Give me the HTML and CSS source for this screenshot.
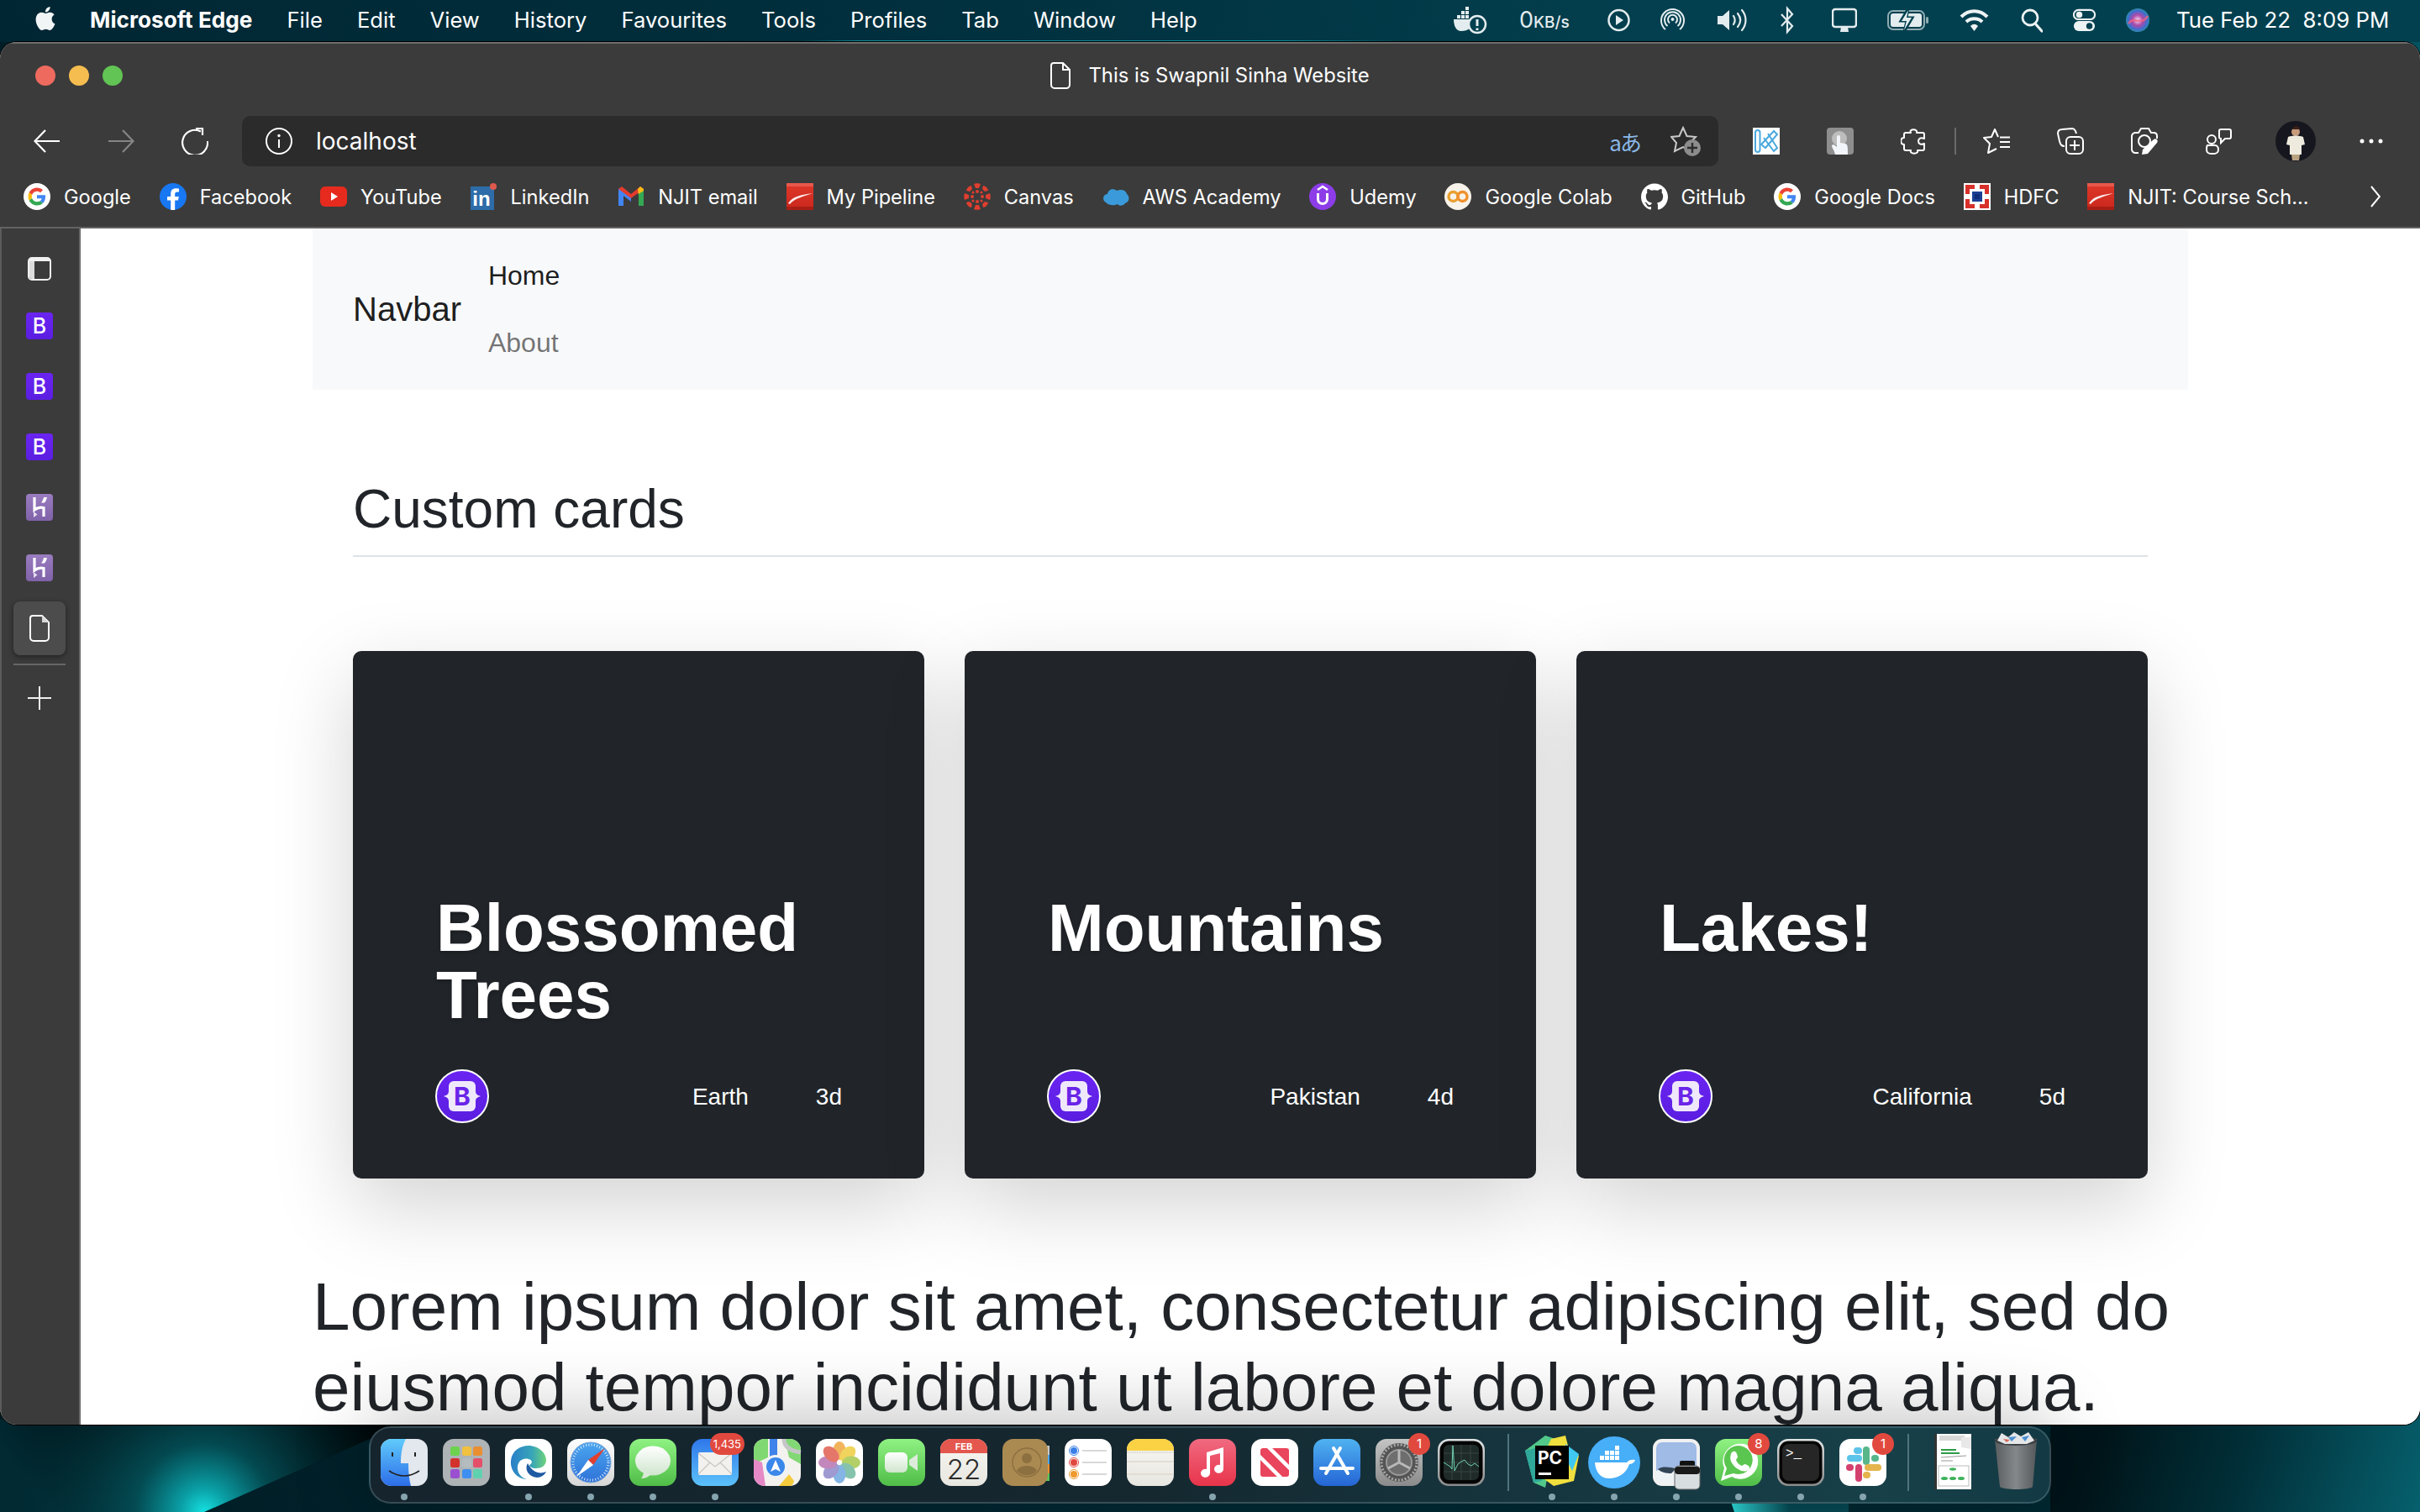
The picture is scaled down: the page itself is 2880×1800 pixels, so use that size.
FILE: index.html
```html
<!DOCTYPE html>
<html lang="en">
<head>
<meta charset="utf-8">
<title>This is Swapnil Sinha Website</title>
<link rel="stylesheet" href="styles.css">
</head>
<body>
<svg class="wallpaper" viewBox="0 0 2880 1800" aria-hidden="true">
  <defs>
    <linearGradient id="wpBase" x1="0" y1="0" x2="1" y2="0"><stop offset="0" stop-color="#001c24"/><stop offset=".5" stop-color="#022a35"/><stop offset=".85" stop-color="#012831"/><stop offset="1" stop-color="#04525f"/></linearGradient>
    <linearGradient id="wpLeftBase" gradientUnits="userSpaceOnUse" x1="200" y1="1695" x2="60" y2="1800"><stop offset="0" stop-color="#000608"/><stop offset="1" stop-color="#012a33"/></linearGradient>
    <radialGradient id="wpLeft" gradientUnits="userSpaceOnUse" cx="243" cy="1800" r="235"><stop offset="0" stop-color="#16e0e0"/><stop offset=".12" stop-color="#0aa0a6"/><stop offset=".35" stop-color="#04545c" stop-opacity=".85"/><stop offset="1" stop-color="#022a33" stop-opacity="0"/></radialGradient>
    <linearGradient id="wpRight" gradientUnits="userSpaceOnUse" x1="2500" y1="1690" x2="2880" y2="1800"><stop offset="0" stop-color="#001419"/><stop offset=".45" stop-color="#012f38"/><stop offset="1" stop-color="#06606d"/></linearGradient>
    <linearGradient id="wpStreak" gradientUnits="userSpaceOnUse" x1="2062" y1="1800" x2="2130" y2="1800"><stop offset="0" stop-color="#2fdcdc"/><stop offset="1" stop-color="#064a55"/></linearGradient>
    <linearGradient id="gBlueV" x1="0" y1="0" x2="0" y2="1"><stop offset="0" stop-color="#6b24f2"/><stop offset="1" stop-color="#5a1ee0"/></linearGradient>
    <linearGradient id="gHero" x1="0" y1="0" x2="0" y2="1"><stop offset="0" stop-color="#9a7cc0"/><stop offset="1" stop-color="#7f62a8"/></linearGradient>
    <linearGradient id="gGreen" x1="0" y1="0" x2="0" y2="1"><stop offset="0" stop-color="#8ff283"/><stop offset="1" stop-color="#50bd48"/></linearGradient>
    <linearGradient id="gFinder" x1="0" y1="0" x2="0" y2="1"><stop offset="0" stop-color="#60cbfb"/><stop offset="1" stop-color="#2c6de9"/></linearGradient>
    <linearGradient id="gMail" x1="0" y1="0" x2="0" y2="1"><stop offset="0" stop-color="#2f77ea"/><stop offset="1" stop-color="#5cc2fb"/></linearGradient>
    <linearGradient id="gEdge" x1="0" y1="0" x2="1" y2="0"><stop offset="0" stop-color="#2a7fc8"/><stop offset=".6" stop-color="#38a5b8"/><stop offset="1" stop-color="#6ed37a"/></linearGradient>
    <linearGradient id="gSafari" x1="0" y1="0" x2="0" y2="1"><stop offset="0" stop-color="#ffffff"/><stop offset="1" stop-color="#d6d6d6"/></linearGradient>
    <linearGradient id="gCompass" x1="0" y1="0" x2="0" y2="1"><stop offset="0" stop-color="#4aa6ef"/><stop offset="1" stop-color="#2e72d8"/></linearGradient>
    <linearGradient id="gBubble" x1="0" y1="0" x2="0" y2="1"><stop offset="0" stop-color="#ffffff"/><stop offset="1" stop-color="#cfe6cd"/></linearGradient>
    <linearGradient id="gMusic" x1="0" y1="0" x2="0" y2="1"><stop offset="0" stop-color="#f06a80"/><stop offset="1" stop-color="#e8344a"/></linearGradient>
    <linearGradient id="gStore" x1="0" y1="0" x2="0" y2="1"><stop offset="0" stop-color="#4fb2f0"/><stop offset="1" stop-color="#2565d6"/></linearGradient>
    <linearGradient id="gPrefs" x1="0" y1="0" x2="0" y2="1"><stop offset="0" stop-color="#c4c4c4"/><stop offset="1" stop-color="#8b8b8b"/></linearGradient>
    <linearGradient id="gBezel" x1="0" y1="0" x2="0" y2="1"><stop offset="0" stop-color="#dfe3e4"/><stop offset="1" stop-color="#8a8a8a"/></linearGradient>
    <linearGradient id="gTrash" x1="0" y1="0" x2="1" y2="0"><stop offset="0" stop-color="#5a5d5f"/><stop offset=".5" stop-color="#85888a"/><stop offset="1" stop-color="#55585a"/></linearGradient>
    <linearGradient id="gPaper" x1="0" y1="0" x2="0" y2="1"><stop offset="0" stop-color="#f8f7f3"/><stop offset="1" stop-color="#e8e6e0"/></linearGradient>
    <linearGradient id="gRedTile" x1="0" y1="0" x2="0" y2="1"><stop offset="0" stop-color="#e0392b"/><stop offset="1" stop-color="#c9261c"/></linearGradient>
    <symbol id="gLogo" viewBox="0 0 32 32"><circle cx="16" cy="16" r="16" fill="#fff"/><g transform="translate(5.5 5.5) scale(.4375)"><path fill="#EA4335" d="M24 9.5c3.54 0 6.71 1.22 9.21 3.6l6.85-6.85C35.9 2.38 30.47 0 24 0 14.62 0 6.51 5.38 2.56 13.22l7.98 6.19C12.43 13.72 17.74 9.5 24 9.5z"/><path fill="#4285F4" d="M46.98 24.55c0-1.57-.15-3.09-.38-4.55H24v9.02h12.94c-.58 2.96-2.26 5.48-4.78 7.18l7.73 6c4.51-4.18 7.09-10.36 7.09-17.65z"/><path fill="#FBBC05" d="M10.53 28.59c-.48-1.45-.76-2.99-.76-4.59s.27-3.14.76-4.59l-7.98-6.19C.92 16.46 0 20.12 0 24c0 3.88.92 7.54 2.56 10.78l7.97-6.19z"/><path fill="#34A853" d="M24 48c6.48 0 11.93-2.13 15.89-5.81l-7.73-6c-2.15 1.45-4.92 2.3-8.16 2.3-6.26 0-11.57-4.22-13.47-9.91l-7.98 6.19C6.51 42.62 14.62 48 24 48z"/></g></symbol>
    <symbol id="njit" viewBox="0 0 32 32"><rect width="32" height="32" fill="url(#gRedTile)"/><rect x="0" y="0" width="32" height="4" fill="#e8584c"/><rect x="0" y="28" width="32" height="4" fill="#a81e15"/><path d="M2 24C8 15 18 14 31 12C20 16 10 18 4 25Z" fill="#fff" opacity=".9"/></symbol>
    <symbol id="bsTile" viewBox="0 0 32 32"><rect width="32" height="32" rx="4" fill="url(#gBlueV)"/><text x="16" y="25" class="sym-b">B</text></symbol>
    <symbol id="heroku" viewBox="0 0 32 32"><rect width="32" height="32" rx="4" fill="url(#gHero)"/><path d="M10 4V19C13 16.500 17 15.500 21 16.500V27" fill="none" stroke="#fff" stroke-width="3.200"/><path d="M21 4H25C24.500 6.500 23.500 8.500 22 10.500H18C19.500 8.500 20.500 6.500 21 4Z" fill="#fff"/><path d="M9 21L13.500 24.500L9 28Z" fill="#e6def0"/></symbol>
    <symbol id="bsRound" viewBox="0 0 64 64"><circle cx="32" cy="32" r="31" fill="url(#gBlueV)" stroke="#fff" stroke-width="2"/><rect x="16" y="14" width="32" height="36" rx="6" fill="#efe8fb"/><path d="M16 26C16 30 13 31 10 32C13 33 16 34 16 38ZM48 26C48 30 51 31 54 32C51 33 48 34 48 38Z" fill="#efe8fb"/><text x="32" y="43" class="sym-b2">B</text></symbol>
  </defs>
  <rect width="2880" height="1800" fill="url(#wpBase)"/>
  <polygon points="0,1690 492,1690 243,1800 0,1800" fill="url(#wpLeftBase)"/>
  <polygon points="0,1690 492,1690 243,1800 0,1800" fill="url(#wpLeft)"/>
  <rect x="2440" y="1690" width="440" height="110" fill="url(#wpRight)"/>
  <polygon points="2060,1788 2200,1788 2200,1800 2064,1800" fill="url(#wpStreak)"/>
</svg>

<header class="menubar">
  <div class="menu-left">
    <svg class="apple" viewBox="0 0 24 24"><path fill="#f2f5f6" d="M12.152 6.896c-.948 0-2.415-1.078-3.96-1.04-2.04.027-3.91 1.183-4.961 3.014-2.117 3.675-.546 9.103 1.519 12.09 1.013 1.454 2.208 3.09 3.792 3.039 1.52-.065 2.09-.987 3.935-.987 1.831 0 2.35.987 3.96.948 1.637-.026 2.676-1.48 3.676-2.948 1.156-1.688 1.636-3.325 1.662-3.415-.039-.013-3.182-1.221-3.22-4.857-.026-3.04 2.48-4.494 2.597-4.559-1.429-2.09-3.623-2.324-4.39-2.376-2-.156-3.675 1.09-4.61 1.09zM15.53 3.83c.843-1.012 1.4-2.427 1.245-3.83-1.207.052-2.662.805-3.532 1.818-.78.896-1.454 2.338-1.273 3.714 1.338.104 2.715-.688 3.559-1.701"/></svg>
    <strong class="menu-app">Microsoft Edge</strong>
    <span>File</span><span>Edit</span><span>View</span><span>History</span><span>Favourites</span><span>Tools</span><span>Profiles</span><span>Tab</span><span>Window</span><span>Help</span>
  </div>
  <div class="menu-right">
    <svg width="43" height="36" viewBox="0 0 43 36"><path d="M1 17H24C24 27 18 31 10 31C4 31 1 25 1 17Z" fill="#e3ecee"/><path d="M5 12h4v4H5zM10 12h4v4h-4zM15 12h4v4h-4zM10 7h4v4h-4zM15 7h4v4h-4zM15 2h4v4h-4z" fill="#e3ecee"/><circle cx="29" cy="23" r="10" fill="#03404f" stroke="#e3ecee" stroke-width="2.500"/><path d="M29 17V25M29 27.500V30" stroke="#e3ecee" stroke-width="3"/></svg>
    <span class="kbs"><span class="kbs-0">0</span>KB/s</span>
    <svg width="27" height="36" viewBox="0 0 27 36"><circle cx="13.500" cy="18" r="12" fill="none" stroke="#e3ecee" stroke-width="2.500"/><path d="M10 12L19 18L10 24Z" fill="#e3ecee"/></svg>
    <svg width="31" height="36" viewBox="0 0 31 36"><g fill="none" stroke="#e3ecee" stroke-width="2"><path d="M6 29A13.500 13.500 0 1 1 23 29"/><path d="M8.500 25A9.500 9.500 0 1 1 20.500 25"/><path d="M11 21.500A5.500 5.500 0 1 1 18 21.500"/></g><circle cx="14.500" cy="17" r="2" fill="#e3ecee"/></svg>
    <svg width="39" height="36" viewBox="0 0 39 36"><path d="M1 13H7L15 6V30L7 23H1Z" fill="#e3ecee"/><path d="M20 13C22 16 22 20 20 23M25 10C29 15 29 21 25 26M30 6C36 13 36 23 30 30" fill="none" stroke="#e3ecee" stroke-width="2.200" stroke-linecap="round"/></svg>
    <svg width="26" height="36" viewBox="0 0 26 36"><path d="M2 11L15 25L9 32V4L15 11L2 25" fill="none" stroke="#e3ecee" stroke-width="2.200"/></svg>
    <svg width="30" height="36" viewBox="0 0 30 36"><rect x="1" y="5" width="28" height="21" rx="3" fill="none" stroke="#e3ecee" stroke-width="2.500"/><path d="M11 26H19L20 32H10Z" fill="#e3ecee"/></svg>
    <svg width="50" height="36" viewBox="0 0 50 36"><rect x="1" y="7" width="43" height="22" rx="6" fill="none" stroke="#8fabb2" stroke-width="2"/><rect x="4" y="10" width="37" height="16" rx="3" fill="#e3ecee"/><rect x="46" y="14" width="3" height="8" rx="1.500" fill="#8fabb2"/><path d="M25 4L16 19H23L20 32L30 15H23Z" fill="#03404f" stroke="#03404f" stroke-width="3"/><path d="M25 6L17 19H23L20 30L29 15H23Z" fill="#e3ecee"/></svg>
    <svg width="37" height="36" viewBox="0 0 37 36"><g fill="none" stroke="#eef3f4" stroke-width="4"><path d="M2 14C11 5 24 5 33 14"/><path d="M8 20C13 15 22 15 27 20"/></g><path d="M13 25C16 22 19 22 22 25L17.500 31Z" fill="#eef3f4"/></svg>
    <svg width="26" height="36" viewBox="0 0 26 36"><circle cx="11" cy="15" r="9" fill="none" stroke="#eef3f4" stroke-width="2.800"/><path d="M17 22L25 31" stroke="#eef3f4" stroke-width="3.200" stroke-linecap="round"/></svg>
    <svg width="27" height="36" viewBox="0 0 29 36"><rect x="1" y="5" width="27" height="12" rx="6" fill="none" stroke="#eef3f4" stroke-width="2.200"/><circle cx="8" cy="11" r="4" fill="#eef3f4"/><rect x="1" y="19" width="27" height="13" rx="6.500" fill="#eef3f4"/><circle cx="21" cy="25.500" r="4" fill="#03404f"/></svg>
    <svg class="siri" width="28" height="36" viewBox="0 0 28 28"><defs><radialGradient id="gSiri" cx=".5" cy=".5" r=".55"><stop offset="0" stop-color="#f2e4f8"/><stop offset=".4" stop-color="#b14aa8"/><stop offset=".75" stop-color="#3a6fd0"/><stop offset="1" stop-color="#2f9e8e"/></radialGradient></defs><circle cx="14" cy="14" r="14" fill="url(#gSiri)"/><path d="M3 18C10 8 18 22 26 9" stroke="#f0627f" stroke-width="2.500" fill="none" opacity=".8"/></svg>
    <span class="clock">Tue Feb 22&nbsp; 8:09 PM</span>
  </div>
</header>

<div class="window">
  <div class="chrome">
    <div class="titlebar">
      <div class="lights"><i class="light red"></i><i class="light yellow"></i><i class="light green"></i></div>
      <div class="title">
        <svg width="24" height="32" viewBox="0 0 24 32"><path d="M4 1H15L23 9V27A4 4 0 0 1 19 31H5A4 4 0 0 1 1 27V4A3 3 0 0 1 4 1ZM15 1V9H23" fill="none" stroke="#fff" stroke-width="2"/></svg>
        <span>This is Swapnil Sinha Website</span>
      </div>
      <div></div>
    </div>
    <div class="toolbar">
      <div class="nav-btns">
        <svg width="32" height="32" viewBox="0 0 32 32"><path d="M31 16H2M14 3L1.500 16L14 29" fill="none" stroke="#fff" stroke-width="2.200"/></svg>
        <svg width="32" height="32" viewBox="0 0 32 32"><path d="M1 16H30M18 3L30.500 16L18 29" fill="none" stroke="#858585" stroke-width="2.200"/></svg>
        <svg width="32" height="32" viewBox="0 0 32 32"><path d="M23 4.500A15 15 0 1 0 31 16" fill="none" stroke="#fff" stroke-width="2.200"/><path d="M17 1H25V9" fill="none" stroke="#fff" stroke-width="2.200"/></svg>
      </div>
      <div class="address">
        <svg width="32" height="32" viewBox="0 0 32 32"><circle cx="16" cy="16" r="15" fill="none" stroke="#fff" stroke-width="2"/><circle cx="16" cy="9.500" r="1.700" fill="#fff"/><path d="M16 14V24" stroke="#fff" stroke-width="2"/></svg>
        <span class="url">localhost</span>
        <span class="addr-right">
          <span class="translate">aあ</span>
          <svg width="37" height="36" viewBox="0 0 37 36"><path d="M15 2L19.500 12L30 13L23 20L25 30L15 25L5 30L7 20L1 13L10.500 12Z" fill="none" stroke="#c9c9c9" stroke-width="2"/><circle cx="26" cy="26" r="10" fill="#8c8c8c"/><path d="M26 20V32M20 26H32" stroke="#2b2b2b" stroke-width="2.400"/></svg>
        </span>
      </div>
      <div class="tools">
        <svg width="32" height="32" viewBox="0 0 32 32"><rect width="32" height="32" fill="#fff"/><g fill="none" stroke="#4aa8de" stroke-width="2"><rect x="3" y="3" width="5.500" height="26" rx="2.750"/><path d="M10 20L25 4L29 8L15 24Z"/><path d="M13 12L25 28L29 24L18 7"/></g></svg>
        <svg width="32" height="32" viewBox="0 0 32 32"><rect width="32" height="32" rx="4" fill="#8e8e8e"/><circle cx="15" cy="13" r="9" fill="#bdbdbd"/><path d="M12 11A2 2 0 0 1 16 11V18L22 19C25 20 25 22 25 32H10C9 27 6 24 6 21C8 19 10 21 12 23Z" fill="#f2f6fb"/></svg>
        <svg width="32" height="32" viewBox="0 0 32 32"><path d="M12 6C9 1 21 1 19 6H26C27 6 28 7 28 8V13C24 11 21 13 21 16C21 19 24 21 28 19V25C28 26 27 27 26 27H20C22 32 10 32 12 27H6C5 27 4 26 4 25V20C-1 20 -1 12 4 12V8C4 7 5 6 6 6Z" fill="none" stroke="#fff" stroke-width="2" stroke-linejoin="round"/></svg>
        <i class="tool-sep"></i>
        <svg width="32" height="32" viewBox="0 0 32 32"><path d="M18 11L14 2L10 11L1 12L8 19L6 30L16 25" fill="none" stroke="#fff" stroke-width="2" stroke-linejoin="round"/><path d="M20 11.500H32M20 17H32M20 23H32" fill="none" stroke="#fff" stroke-width="2"/></svg>
        <svg width="32" height="32" viewBox="0 0 32 32"><path d="M9 22C5 22 4 20 3 16L1 7C1 4 3 2 6 2L18 1C20 1 22 3 23 7" fill="none" stroke="#fff" stroke-width="2"/><rect x="11" y="11" width="20" height="20" rx="5" fill="none" stroke="#fff" stroke-width="2"/><path d="M21 15V27M15 21H27" stroke="#fff" stroke-width="2"/></svg>
        <svg width="32" height="32" viewBox="0 0 32 32"><path d="M9 30H5C3 30 1 28 1 26V10C1 8 3 6 5 6H9L12 1H21L24 6H27C30 6 31 8 31 10V13" fill="none" stroke="#fff" stroke-width="2"/><circle cx="16" cy="16" r="7" fill="none" stroke="#fff" stroke-width="2"/><path d="M27 14C30 12 33 15 31 18L20 31L13 32L14 26Z" fill="#fff"/></svg>
        <svg width="32" height="32" viewBox="0 0 32 32"><circle cx="8" cy="14" r="5" fill="none" stroke="#fff" stroke-width="2"/><path d="M3 21H12C15 21 16 24 16 26C16 30 14 31 9 31C4 31 2 30 2 26C2 24 2 22 3 21Z" fill="none" stroke="#fff" stroke-width="2"/><path d="M19 2H29C31 2 31 3 31 4V11C31 13 30 13 29 13H24L19 18V13C18 13 17 12 17 11V4C17 3 18 2 19 2Z" fill="none" stroke="#fff" stroke-width="2"/></svg>
        <svg class="avatar-user" width="48" height="48" viewBox="0 0 48 48"><circle cx="24" cy="24" r="24" fill="#16161f"/><circle cx="24" cy="13" r="5" fill="#c79a7a"/><path d="M22 7C24 5 29 6 29 10L20 10Z" fill="#3a2018"/><path d="M15 19C20 17 28 17 33 19L35 28L31 29L31 40H17L17 29L13 28Z" fill="#eeeadd"/><path d="M19 40H29L28 47H20Z" fill="#b9a27f"/></svg>
        <svg class="more" width="28" height="8" viewBox="0 0 28 8"><circle cx="3" cy="4" r="2.500" fill="#fff"/><circle cx="14" cy="4" r="2.500" fill="#fff"/><circle cx="25" cy="4" r="2.500" fill="#fff"/></svg>
      </div>
    </div>
    <nav class="bookmarks">
      <a class="bm"><svg><use href="#gLogo"/></svg>Google</a>
      <a class="bm"><svg viewBox="0 0 32 32"><circle cx="16" cy="16" r="16" fill="#1877f2"/><path d="M22 20.500L22.800 16H18.200V13C18.200 11.700 18.900 10.500 20.900 10.500H23V6.600C23 6.600 21.100 6.300 19.300 6.300C15.600 6.300 13.200 8.500 13.200 12.600V16H9V20.500H13.200V32H18.200V20.500Z" fill="#fff"/></svg>Facebook</a>
      <a class="bm"><svg viewBox="0 0 32 32"><rect y="4" width="32" height="24" rx="6" fill="#e62b1e"/><path d="M13 11L21 16L13 21Z" fill="#fff"/></svg>YouTube</a>
      <a class="bm"><svg viewBox="0 0 32 32"><rect y="4" width="28" height="28" fill="#2d6ca8"/><circle cx="27" cy="4" r="4" fill="#e0594c"/><text x="13" y="27" class="sym-in">in</text></svg>LinkedIn</a>
      <a class="bm"><svg viewBox="0 0 32 32"><path d="M1 7L4 5L16 16V22L7 15V27H1Z" fill="#4285f4"/><path d="M1 7L16 18L31 7L27 4L16 13L5 4Z" fill="#e33b2e"/><path d="M27 4L31 7V11L25 15L24 7Z" fill="#f8bb15"/><path d="M25 13L31 9V27H25Z" fill="#34a853"/></svg>NJIT email</a>
      <a class="bm"><svg><use href="#njit"/></svg>My Pipeline</a>
      <a class="bm"><svg viewBox="0 0 32 32"><g fill="#e03e2f"><circle cx="16" cy="10" r="2"/><circle cx="22" cy="16" r="2"/><circle cx="16" cy="22" r="2"/><circle cx="10" cy="16" r="2"/><circle cx="21" cy="11" r="1.600"/><circle cx="21" cy="21" r="1.600"/><circle cx="11" cy="21" r="1.600"/><circle cx="11" cy="11" r="1.600"/><path d="M12 1C14 0 18 0 20 1L18 6H14ZM12 31C14 32 18 32 20 31L18 26H14ZM1 12C0 14 0 18 1 20L6 18V14ZM31 12C32 14 32 18 31 20L26 18V14ZM5 5C6 4 8 3 9 3L10 7L7 10L3 9C3 8 4 6 5 5ZM27 5C26 4 24 3 23 3L22 7L25 10L29 9C29 8 28 6 27 5ZM5 27C6 28 8 29 9 29L10 25L7 22L3 23C3 24 4 26 5 27ZM27 27C26 28 24 29 23 29L22 25L25 22L29 23C29 24 28 26 27 27Z"/></g></svg>Canvas</a>
      <a class="bm"><svg viewBox="0 0 32 32"><path d="M4 23C-1 20 1 13 6 13C7 7 13 6 17 9C22 7 28 8 29 13C33 16 32 23 27 24C25 27 20 28 18 25C14 27 8 27 4 23Z" fill="#3b9ad9"/></svg>AWS Academy</a>
      <a class="bm"><svg viewBox="0 0 32 32"><circle cx="16" cy="16" r="16" fill="#8c3de8"/><path d="M10 8L16 4L22 8" fill="none" stroke="#fff" stroke-width="2.500"/><path d="M10.500 12V19A5.500 5.500 0 0 0 21.500 19V12" fill="none" stroke="#fff" stroke-width="3"/></svg>Udemy</a>
      <a class="bm"><svg viewBox="0 0 32 32"><circle cx="16" cy="16" r="16" fill="#f8f3ea"/><circle cx="10.500" cy="16" r="5.500" fill="none" stroke="#e8a030" stroke-width="3.400"/><circle cx="21.500" cy="16" r="5.500" fill="none" stroke="#f0902a" stroke-width="3.400"/></svg>Google Colab</a>
      <a class="bm"><svg viewBox="0 0 24 24"><path fill="#fff" d="M12 .297c-6.630 0-12 5.373-12 12 0 5.303 3.438 9.800 8.205 11.385.6.113.82-.258.82-.577 0-.285-.01-1.040-.015-2.040-3.338.724-4.042-1.610-4.042-1.610C4.422 18.070 3.633 17.700 3.633 17.700c-1.087-.744.084-.729.084-.729 1.205.084 1.838 1.236 1.838 1.236 1.070 1.835 2.809 1.305 3.495.998.108-.776.417-1.305.76-1.605-2.665-.3-5.466-1.332-5.466-5.930 0-1.310.465-2.380 1.235-3.220-.135-.303-.54-1.523.105-3.176 0 0 1.005-.322 3.300 1.230.96-.267 1.980-.399 3-.405 1.020.006 2.040.138 3 .405 2.280-1.552 3.285-1.230 3.285-1.230.645 1.653.24 2.873.12 3.176.765.84 1.230 1.910 1.230 3.220 0 4.610-2.805 5.625-5.475 5.920.42.36.81 1.096.81 2.220 0 1.606-.015 2.896-.015 3.286 0 .315.21.69.825.57C20.565 22.092 24 17.592 24 12.297c0-6.627-5.373-12-12-12"/></svg>GitHub</a>
      <a class="bm"><svg><use href="#gLogo"/></svg>Google Docs</a>
      <a class="bm"><svg viewBox="0 0 32 32"><rect width="32" height="32" fill="#fff"/><path d="M2 2H13V7H7V13H2ZM19 2H30V13H25V7H19ZM2 19H7V25H13V30H2ZM25 19H30V30H19V25H25Z" fill="#d8302b"/><rect x="10" y="10" width="12" height="12" fill="#1c3f94"/><rect x="13" y="13" width="6" height="6" fill="#0f2d78"/></svg>HDFC</a>
      <a class="bm"><svg><use href="#njit"/></svg>NJIT: Course Sch...</a>
      <svg class="bm-next" width="12" height="26" viewBox="0 0 12 26"><path d="M1 1L11 13L1 25" fill="none" stroke="#fff" stroke-width="2"/></svg>
    </nav>
  </div>

  <div class="body-row">
    <aside class="sidebar">
      <div class="side-item first"><svg width="28" height="28" viewBox="0 0 28 28"><rect x="1" y="1" width="26" height="26" rx="4" fill="none" stroke="#f0f0f0" stroke-width="2"/><path d="M1 5A4 4 0 0 1 5 1H23A4 4 0 0 1 27 5V5H1Z" fill="#f0f0f0"/><path d="M2 5H8V26H5A3 3 0 0 1 2 23Z" fill="#dcdcdc"/></svg></div>
      <div class="side-item"><svg width="32" height="32"><use href="#bsTile"/></svg></div>
      <div class="side-item"><svg width="32" height="32"><use href="#bsTile"/></svg></div>
      <div class="side-item"><svg width="32" height="32"><use href="#bsTile"/></svg></div>
      <div class="side-item"><svg width="32" height="32"><use href="#heroku"/></svg></div>
      <div class="side-item"><svg width="32" height="32"><use href="#heroku"/></svg></div>
      <div class="side-item"><div class="side-active"><svg width="24" height="32" viewBox="0 0 24 32"><path d="M4 1H15L23 9V27A4 4 0 0 1 19 31H5A4 4 0 0 1 1 27V4A3 3 0 0 1 4 1Z" fill="none" stroke="#fff" stroke-width="2"/><path d="M15 1V9H23Z" fill="#d8d8d8"/></svg></div></div>
      <i class="side-rule"></i>
      <div class="side-plus"><svg width="28" height="28" viewBox="0 0 28 28"><path d="M14 0V28M0 14H28" stroke="#f0f0f0" stroke-width="2"/></svg></div>
    </aside>

    <main class="page">
      <div class="container">
        <nav class="navbar">
          <a class="brand">Navbar</a>
          <ul class="nav-links">
            <li class="nav-active">Home</li>
            <li>About</li>
          </ul>
        </nav>
        <section class="cards-section">
          <h2 class="section-title">Custom cards</h2>
          <div class="cards">
            <article class="card">
              <h3 class="card-title">Blossomed Trees</h3>
              <ul class="card-meta"><li class="card-avatar"><svg width="64" height="64"><use href="#bsRound"/></svg></li><li>Earth</li><li class="days">3d</li></ul>
            </article>
            <article class="card">
              <h3 class="card-title">Mountains</h3>
              <ul class="card-meta"><li class="card-avatar"><svg width="64" height="64"><use href="#bsRound"/></svg></li><li>Pakistan</li><li class="days">4d</li></ul>
            </article>
            <article class="card">
              <h3 class="card-title">Lakes!</h3>
              <ul class="card-meta"><li class="card-avatar"><svg width="64" height="64"><use href="#bsRound"/></svg></li><li>California</li><li class="days">5d</li></ul>
            </article>
          </div>
        </section>
        <p class="lorem">Lorem ipsum dolor sit amet, consectetur adipiscing elit, sed do eiusmod tempor incididunt ut labore et dolore magna aliqua.</p>
      </div>
    </main>
  </div>
</div>

<footer class="dock-row">
  <div class="dock">
    <div class="app on"><svg viewBox="0 0 56 56"><rect width="56" height="56" rx="13" fill="#e3e8ee"/><path d="M13 0H30C25 9 24 20 24 29H33C33 40 34 49 36 56H13A13 13 0 0 1 0 43V13A13 13 0 0 1 13 0Z" fill="url(#gFinder)"/><path d="M14 16V21M41 16V21" stroke="#222" stroke-width="2"/><path d="M10 38Q28 50 46 38" fill="none" stroke="#222" stroke-width="1.600"/></svg></div>
    <div class="app"><svg viewBox="0 0 56 56"><rect width="56" height="56" rx="13" fill="#aeb3b6"/><rect x="9" y="9" width="11" height="11" rx="2.500" fill="#6dd34f"/><rect x="23" y="9" width="11" height="11" rx="2.500" fill="#f2c13f"/><rect x="36" y="9" width="11" height="11" rx="2.500" fill="#e98f32"/><rect x="9" y="23" width="11" height="11" rx="2.500" fill="#d3322c"/><rect x="23" y="23" width="11" height="11" rx="2.500" fill="#b5bcc0"/><rect x="36" y="23" width="11" height="11" rx="2.500" fill="#e4506a"/><rect x="9" y="36" width="11" height="11" rx="2.500" fill="#9a4fd0"/><rect x="23" y="36" width="11" height="11" rx="2.500" fill="#3f8ff0"/><rect x="36" y="36" width="11" height="11" rx="2.500" fill="#5fd1ae"/></svg></div>
    <div class="app on"><svg viewBox="0 0 56 56"><rect width="56" height="56" rx="13" fill="#fff"/><path d="M7 26C8 14 18 8 28 8C40 8 49 17 49 25C49 32 43 35 37 35C32 35 29 33 29 31C33 29 33 25 28 24C20 22 14 28 15 36C16 43 21 47 26 48C15 48 6 38 7 26Z" fill="url(#gEdge)"/><path d="M27 29C23 35 27 45 38 46C43 46 47 43 49 39C42 42 33 41 27 29Z" fill="#1f5aa3"/></svg></div>
    <div class="app on"><svg viewBox="0 0 56 56"><rect width="56" height="56" rx="13" fill="url(#gSafari)"/><circle cx="28" cy="28" r="24" fill="url(#gCompass)" stroke="#7fa6d6"/><circle cx="28" cy="28" r="21" fill="none" stroke="#fff" stroke-width="3" stroke-dasharray="1 2.300" opacity=".8"/><polygon points="45,11 31,31 25,25" fill="#e2402f"/><polygon points="11,45 25,25 31,31" fill="#fff"/></svg></div>
    <div class="app on"><svg viewBox="0 0 56 56"><rect width="56" height="56" rx="13" fill="url(#gGreen)"/><ellipse cx="28" cy="26" rx="21" ry="17.500" fill="url(#gBubble)"/><path d="M17 38C17 42 16 45 14 47C19 47 23 45 26 42Z" fill="#d8e9d6"/></svg></div>
    <div class="app on"><svg viewBox="0 0 56 56"><rect width="56" height="56" rx="13" fill="url(#gMail)"/><rect x="8" y="16" width="40" height="27" rx="2" fill="#f3f1ee"/><path d="M8 17L28 33L48 17M8 42L22 28M48 42L34 28" fill="none" stroke="#c7c4c0" stroke-width="1.200"/></svg><b class="badge badge-wide">1,435</b></div>
    <div class="app"><svg viewBox="0 0 56 56"><rect width="56" height="56" rx="13" fill="#f4f2ee"/><path d="M0 13A13 13 0 0 1 13 0H17V22L0 30Z" fill="#80d872"/><path d="M0 24L10 28L14 56H13A13 13 0 0 1 0 43Z" fill="#e58ac6"/><path d="M30 56L42 42L48 50C47 54 45 56 43 56Z" fill="#f5cb3e"/><path d="M37 0H43A13 13 0 0 1 56 13V30L42 22Z" fill="#82d874"/><path d="M36 0C36 8 42 14 56 16" fill="none" stroke="#c5c6c8" stroke-width="5"/><rect x="19" y="0" width="9" height="24" fill="#3f83ea"/><circle cx="26" cy="33" r="14" fill="#f0f2f5"/><circle cx="26" cy="33" r="11" fill="#3b87ea"/><path d="M26 25L32 39L26 36L20 39Z" fill="#fff"/></svg></div>
    <div class="app"><svg viewBox="0 0 56 56"><rect width="56" height="56" rx="13" fill="#fff"/><g opacity=".82"><ellipse cx="28" cy="14" rx="7.500" ry="11" fill="#f0a33a"/><ellipse cx="28" cy="14" rx="7.500" ry="11" fill="#efcb3a" transform="rotate(45 28 28)"/><ellipse cx="28" cy="14" rx="7.500" ry="11" fill="#a3c648" transform="rotate(90 28 28)"/><ellipse cx="28" cy="14" rx="7.500" ry="11" fill="#6cb79a" transform="rotate(135 28 28)"/><ellipse cx="28" cy="14" rx="7.500" ry="11" fill="#6aa6e0" transform="rotate(180 28 28)"/><ellipse cx="28" cy="14" rx="7.500" ry="11" fill="#8a85c8" transform="rotate(225 28 28)"/><ellipse cx="28" cy="14" rx="7.500" ry="11" fill="#b56fae" transform="rotate(270 28 28)"/><ellipse cx="28" cy="14" rx="7.500" ry="11" fill="#e0584a" transform="rotate(315 28 28)"/></g></svg></div>
    <div class="app"><svg viewBox="0 0 56 56"><rect width="56" height="56" rx="13" fill="url(#gGreen)"/><rect x="8" y="16" width="27" height="24" rx="6" fill="url(#gBubble)"/><path d="M37 25L47 18V38L37 31Z" fill="#dcebda"/></svg></div>
    <div class="app"><svg viewBox="0 0 56 56"><rect width="56" height="56" rx="13" fill="url(#gPaper)"/><path d="M0 17V13A13 13 0 0 1 13 0H43A13 13 0 0 1 56 13V17Z" fill="#e4574e"/><text x="28" y="13" class="cal-mon">FEB</text><text x="28" y="48" class="cal-day">22</text></svg></div>
    <div class="app"><svg viewBox="0 0 56 56"><rect x="50" y="8" width="6" height="11" fill="#c8c8c8"/><rect x="50" y="19" width="6" height="11" fill="#4aa6ef"/><rect x="50" y="30" width="6" height="11" fill="#ee8f2c"/><rect x="50" y="41" width="6" height="9" fill="#5dc35a"/><rect width="54" height="56" rx="13" fill="#ab8a52"/><circle cx="29" cy="28" r="17" fill="none" stroke="#8d7040" stroke-width="1.500"/><circle cx="29" cy="23" r="6" fill="#8d7040"/><path d="M17 38C20 30 38 30 41 38C35 45 23 45 17 38Z" fill="#8d7040"/></svg></div>
    <div class="app"><svg viewBox="0 0 56 56"><rect width="56" height="56" rx="13" fill="#fff"/><circle cx="11" cy="14" r="4" fill="#3a7fe8"/><circle cx="11" cy="14" r="5.500" fill="none" stroke="#3a7fe8"/><circle cx="11" cy="28" r="4" fill="#e0473e"/><circle cx="11" cy="28" r="5.500" fill="none" stroke="#e0473e"/><circle cx="11" cy="42" r="4" fill="#ee9a2e"/><circle cx="11" cy="42" r="5.500" fill="none" stroke="#ee9a2e"/><path d="M21 14H50M21 28H50M21 42H50" stroke="#cbcbcb" stroke-width="1.500"/></svg></div>
    <div class="app"><svg viewBox="0 0 56 56"><rect width="56" height="56" rx="13" fill="url(#gPaper)"/><path d="M0 14V13A13 13 0 0 1 13 0H43A13 13 0 0 1 56 13V14Z" fill="#fbd244"/><path d="M0 27H56M0 42H56" stroke="#ddd9d0" stroke-width="1.500"/><path d="M0 16H56" stroke="#cfccc3" stroke-dasharray="1 1" stroke-width="1.500"/></svg></div>
    <div class="app on"><svg viewBox="0 0 56 56"><rect width="56" height="56" rx="13" fill="url(#gMusic)"/><path d="M21 16L41 10V36A5.500 5 0 1 1 37 31V17L25 20V41A5.500 5 0 1 1 21 36Z" fill="#fff"/></svg></div>
    <div class="app"><svg viewBox="0 0 56 56"><rect width="56" height="56" rx="13" fill="#fff"/><rect x="11" y="11" width="34" height="34" rx="3" fill="#e9455c"/><path d="M9 20L36 47M20 9L47 36" stroke="#fff" stroke-width="4.500"/></svg></div>
    <div class="app"><svg viewBox="0 0 56 56"><rect width="56" height="56" rx="13" fill="url(#gStore)"/><path d="M32 11L15 41M24 11L41 41M9 35H47" stroke="#fff" stroke-width="4" stroke-linecap="round"/></svg></div>
    <div class="app"><svg viewBox="0 0 56 56"><rect width="56" height="56" rx="13" fill="url(#gPrefs)"/><circle cx="28" cy="28" r="23" fill="#545454"/><circle cx="28" cy="28" r="21" fill="none" stroke="#aaa" stroke-width="3" stroke-dasharray="2 2"/><circle cx="28" cy="28" r="15" fill="#6e6e6e" stroke="#999" stroke-width="2"/><path d="M28 28V13M28 28L41 35M28 28L15 35" stroke="#b9b9b9" stroke-width="3"/></svg><b class="badge">1</b></div>
    <div class="app"><svg viewBox="0 0 56 56"><rect width="56" height="56" rx="13" fill="url(#gBezel)"/><rect x="2.500" y="2.500" width="51" height="51" rx="11" fill="#050505"/><rect x="7" y="7" width="42" height="42" rx="6" fill="#1f2b28"/><path d="M7 17H49M7 28H49M7 39H49M17 7V49M28 7V49M39 7V49" stroke="#3a4c47" stroke-width=".8"/><path d="M7 28L15 33L17 36L18 8L20 38L24 30L28 27L32 25L36 30L40 32L44 29L49 33" fill="none" stroke="#6fd0b0" stroke-width="1"/></svg></div>
    <i class="dock-sep first-sep"></i>
    <div class="app on"><svg viewBox="0 0 56 56"><polygon points="-4,14 20,-4 32,0 20,58 6,52" fill="#52c98a"/><polygon points="27,0 44,-4 48,12 60,20 54,50 30,56 8,40" fill="#f0df3e"/><polygon points="44,6 60,18 52,38 46,26" fill="#3fc8f0"/><polygon points="-4,14 12,10 16,50 6,52" fill="#2fa89b"/><rect x="8" y="8" width="40" height="40" fill="#000"/><text x="11" y="30" class="pc">PC</text><rect x="12" y="40" width="15" height="3" fill="#fff"/></svg></div>
    <div class="app on"><svg viewBox="0 0 56 56"><circle cx="28" cy="28" r="31" fill="#47aef8"/><path d="M5 28H43C45 25 49 24 53 25C52 29 48 30 46 30C42 42 32 47 22 47C12 47 6 40 5 28Z" fill="#fff"/><path d="M11 20h5v5h-5zM17 20h5v5h-5zM23 20h5v5h-5zM29 20h5v5h-5zM17 14h5v5h-5zM23 14h5v5h-5zM29 14h5v5h-5zM29 8h5v5h-5z" fill="#fff"/></svg></div>
    <div class="app on"><svg viewBox="0 0 56 56"><rect width="56" height="56" rx="11" fill="#f1f1f1"/><rect x="4" y="4" width="48" height="48" rx="7" fill="#9fbbe6"/><path d="M4 38C12 34 22 36 30 33L52 36V45C52 49 50 52 47 52H9C6 52 4 49 4 46Z" fill="#eef2f5"/><path d="M6 36C12 32 20 34 28 35L22 41C16 41 10 40 6 36Z" fill="#345"/><rect x="32" y="26" width="18" height="8" rx="2" fill="#111"/><rect x="26" y="32" width="30" height="28" rx="5" fill="#d8dde0" stroke="#666"/><rect x="26" y="33" width="30" height="9" rx="4" fill="#1a1a1a"/></svg></div>
    <div class="app on"><svg viewBox="0 0 56 56"><rect width="56" height="56" rx="13" fill="url(#gGreen)"/><path d="M7 50L11 35A21 21 0 1 1 20 45Z" fill="#fff"/><path d="M11 44L14 35A17 17 0 1 1 22 41Z" fill="#5bc64f"/><path d="M20 16C22 14 25 14 26 18L27 21C27 23 25 24 25 25C26 28 29 31 32 32C33 32 34 30 36 30L40 32C42 34 41 37 38 38C33 40 25 36 21 30C17 25 18 19 20 16Z" fill="#fff"/></svg><b class="badge">8</b></div>
    <div class="app on"><svg viewBox="0 0 56 56"><rect width="56" height="56" rx="13" fill="url(#gBezel)"/><rect x="2.500" y="2.500" width="51" height="51" rx="11" fill="#050505"/><rect x="6" y="6" width="44" height="44" rx="8" fill="#262626"/><text x="10" y="22" class="term">&gt;_</text></svg></div>
    <div class="app on"><svg viewBox="0 0 56 56"><rect width="56" height="56" rx="13" fill="#fff"/><g stroke-width="8" stroke-linecap="round"><path d="M21 14H23" stroke="#5cc4ea" fill="none"/><path d="M13 23H23" stroke="#5cc4ea"/><path d="M32 13V27" stroke="#58b68b"/><path d="M42 23H43" stroke="#58b68b"/><path d="M34 34H46" stroke="#e5b44d"/><path d="M32 43H33" stroke="#e5b44d"/><path d="M12 34H13" stroke="#d4416f"/><path d="M23 34V47" stroke="#d4416f"/></g></svg><b class="badge">1</b></div>
    <i class="dock-sep second-sep"></i>
    <div class="app"><svg viewBox="0 0 56 56"><rect x="6" y="-6" width="44" height="66" fill="#fff"/><rect x="6" y="-6" width="3" height="66" fill="#333"/><rect x="12" y="-4" width="30" height="6" fill="#d8d8d8"/><path d="M38 -2H50V12L38 10Z" fill="#e8e8e8"/><rect x="14" y="12" width="18" height="2" fill="#2d9b47"/><rect x="14" y="16" width="22" height="2" fill="#2d9b47"/><path d="M14 26H28M14 22L44 20" stroke="#999"/><rect x="11" y="32" width="36" height="24" fill="none" stroke="#bbb"/><ellipse cx="28" cy="36" rx="4" ry="1.700" fill="#3fb35c"/><ellipse cx="18" cy="47" rx="4" ry="2" fill="#3fb35c"/><ellipse cx="28" cy="47" rx="4" ry="2" fill="#3fb35c"/><ellipse cx="38" cy="47" rx="4" ry="2" fill="#3fb35c"/></svg></div>
    <div class="app"><svg viewBox="0 0 56 56"><path d="M4 0H54L49 57C46 61 14 61 10 57Z" fill="url(#gTrash)"/><ellipse cx="29" cy="2" rx="25" ry="6" fill="#3c4043"/><path d="M7 2L12 -7L20 -2L27 -8L35 -3L44 -8L51 2L42 6H16Z" fill="#e4e6e8"/><path d="M20 -2L24 3L30 -3ZM36 -2L40 3L45 -4Z" fill="#4a8fd0"/><path d="M14 0L18 4L22 1Z" fill="#d86a5a"/></svg></div>
  </div>
</footer>
</body>
</html>
```

FILE: styles.css
```css
* { box-sizing: border-box; }
html, body { margin: 0; padding: 0; }
body {
  position: relative;
  width: 2880px;
  height: 1800px;
  overflow: hidden;
  font-family: "Liberation Sans", Arial, sans-serif;
  background: #012a35;
}
ul { list-style: none; margin: 0; padding: 0; }
.wallpaper { position: absolute; left: 0; top: 0; width: 2880px; height: 1800px; }

.sym-b { font: 500 25px "Inter", sans-serif; fill: #fff; text-anchor: middle; }
.sym-b2 { font: 700 30px "Inter", sans-serif; fill: #6a24e8; text-anchor: middle; }
.sym-in { font: 700 24px "Liberation Sans", sans-serif; fill: #fff; text-anchor: middle; }
.cal-mon { font: 700 11px "Inter", sans-serif; fill: #fff; text-anchor: middle; }
.cal-day { font: 300 33px "Inter", sans-serif; fill: #2b2b2b; text-anchor: middle; }
.pc { font: 700 21px "Inter", sans-serif; fill: #fff; }
.term { font: 400 16px "Liberation Mono", monospace; fill: #fff; }

/* Menu bar */
.menubar {
  position: relative;
  height: 50px;
  display: flex;
  justify-content: space-between;
  align-items: center;
  padding: 0 37px 3px 40px;
  color: #fff;
  font: 400 26px "Inter", sans-serif;
  background:
    linear-gradient(90deg, transparent 33%, #0c8a94 35.5%, #0c8a94 53%, #064c58 57%, transparent 58%) left bottom / 100% 2px no-repeat,
    linear-gradient(90deg, #012633 0%, #01303e 40%, #03404f 70%, #03404f 100%);
}
.menu-left { display: flex; align-items: center; gap: 41px; font-size: 25.6px; }
.apple { width: 28px; height: 32px; margin-top: -4px; margin-right: -2px; }
.menu-app { font-size: 26.2px; font-weight: 700; }
.menu-right { display: flex; align-items: center; gap: 36px; color: #e3ecee; }
.kbs { display: block; width: 69px; font-size: 19px; font-weight: 500; white-space: nowrap; }
.kbs-0 { font-size: 27px; font-weight: 400; }
.clock { color: #fff; font-size: 25.8px; width: 253px; white-space: nowrap; margin-left: -4px; }

/* Browser window */
.window {
  position: relative;
  z-index: 1;
  width: 2880px;
  height: 1646px;
  border-radius: 20px;
  overflow: hidden;
  background: #fff;
  box-shadow: 0 0 0 1px #000;
  display: flex;
  flex-direction: column;
}
.chrome {
  flex: none;
  background: #3b3b3b;
  border-top: 2px solid #6e6e6e;
  border-bottom: 2px solid #636363;
  color: #fff;
  font-family: "Inter", sans-serif;
}
.titlebar {
  height: 80px;
  padding: 0 42px 5px;
  display: grid;
  grid-template-columns: 1fr auto 1fr;
  align-items: center;
}
.lights { display: flex; gap: 16px; }
.light { width: 24px; height: 24px; border-radius: 50%; display: block; }
.red { background: #ee6a5f; }
.yellow { background: #f5bd4f; }
.green { background: #61c454; }
.title { display: flex; align-items: center; gap: 21px; font-size: 23.8px; }

.toolbar { height: 72px; display: flex; align-items: center; padding-left: 40px; }
.nav-btns { display: flex; align-items: center; gap: 56px; }
.address {
  width: 1757px;
  height: 60px;
  margin: 0 41px 0 40px;
  padding: 0 20px 0 28px;
  display: flex;
  align-items: center;
  gap: 28px;
  background: #2b2b2b;
  border-radius: 10px;
}
.url { font-size: 28px; }
.addr-right { margin-left: auto; display: flex; align-items: center; gap: 36px; }
.translate { color: #8ab8e6; font: 400 26px "Noto Sans CJK JP", "Inter", sans-serif; letter-spacing: -2px; }
.tools { display: flex; align-items: center; gap: 56px; }
.tool-sep { width: 2px; height: 32px; background: #6a6a6a; margin: 0 -24px; display: block; }
.avatar-user { margin-left: -4px; }
.more { margin-left: -4px; }

.bookmarks { height: 66px; padding: 0 0 6px 28px; display: flex; align-items: center; gap: 33.8px; font-size: 23.6px; position: relative; }
.bm { display: flex; align-items: center; gap: 16px; white-space: nowrap; color: #fff; }
.bm svg { width: 32px; height: 32px; flex: none; overflow: hidden; }
.bm-next { margin-left: auto; margin-right: 47px; }

.body-row { flex: 1; min-height: 0; display: flex; }
.sidebar {
  flex: none;
  width: 96px;
  background: #3b3b3b;
  border-left: 2px solid #5c5c5c;
  border-right: 2px solid #6a6a6a;
  padding: 16px 0 0 14px;
  display: flex;
  flex-direction: column;
}
.side-item { width: 62px; height: 72px; display: flex; align-items: center; justify-content: center; }
.side-item.first { height: 64px; }
.side-active {
  width: 62px;
  height: 64px;
  background: #4c4c4c;
  border-radius: 8px;
  box-shadow: 0 2px 6px rgba(0,0,0,.45);
  display: flex;
  align-items: center;
  justify-content: center;
}
.side-rule { display: block; width: 62px; height: 2px; margin-top: 6px; background: #666; }
.side-plus { width: 62px; height: 78px; display: flex; align-items: center; justify-content: center; }

/* Page */
.page { flex: 1; min-width: 0; overflow: hidden; background: #fff; color: #212529; }
.container { width: 2232px; margin: 0 auto; }
.navbar { height: 192px; padding: 16px 48px; display: flex; align-items: center; gap: 32px; background: #f8f9fa; }
.brand { font-size: 40px; line-height: 60px; color: rgba(0,0,0,.9); }
.nav-links { display: flex; flex-direction: column; font-size: 32px; line-height: 48px; color: rgba(0,0,0,.55); }
.nav-links li { padding: 16px 0; }
.nav-active { color: rgba(0,0,0,.9); }
.cards-section { padding: 104px 48px 0; }
.section-title { margin: 0; padding-bottom: 16px; border-bottom: 2px solid #dee2e6; font-size: 64px; font-weight: 400; line-height: 76.8px; }
.cards { display: grid; grid-template-columns: repeat(3, 680px); gap: 48px; margin-top: 112px; }
.card {
  height: 628px;
  padding: 290px 98px 66px 99px;
  display: flex;
  flex-direction: column;
  color: #fff;
  background: #212529;
  border-radius: 10px;
  box-shadow: 0 32px 96px rgba(0,0,0,.175);
}
.card-title { margin: 0 0 48px; font-size: 80px; line-height: 80px; font-weight: 700; text-shadow: 0 2px 4px rgba(0,0,0,.25); }
.card-meta { margin-top: auto; display: flex; align-items: center; font-size: 28px; line-height: 44px; }
.card-meta li + li { padding-top: 2px; }
.card-avatar { margin: 0 auto 0 -1px; height: 64px; }
.card-avatar svg { display: block; }
.days { margin-left: 80px; }
.lorem { margin: 105px 0 0; font-size: 80px; line-height: 96px; font-weight: 400; }

/* Dock */
.dock-row { position: relative; z-index: 2; padding: 2px 0 0 439px; }
.dock {
  width: 2002px;
  height: 92px;
  padding: 13px 12px 0;
  display: flex;
  gap: 18px;
  border: 2px solid rgba(120,150,158,.35);
  border-radius: 26px;
  background: linear-gradient(90deg, #15242d 0%, #15272f 45%, #16363f 70%, #174049 90%, #133a44 100%);
  box-shadow: 0 -6px 90px rgba(0,0,0,.28);
}
.app { position: relative; width: 56px; height: 56px; flex: none; }
.app svg { display: block; width: 56px; height: 56px; overflow: visible; }
.app.on::after {
  content: "";
  position: absolute;
  left: 24px;
  top: 65px;
  width: 8px;
  height: 8px;
  border-radius: 50%;
  background: #85a4ae;
}
.dock-sep { display: block; flex: none; width: 2px; height: 68px; margin-top: -6px; background: #4f7480; }
.first-sep { margin-left: 9px; margin-right: 5px; }
.second-sep { margin-left: 7px; margin-right: 6px; }
.badge {
  position: absolute;
  top: -7px;
  right: -9px;
  min-width: 26px;
  height: 26px;
  padding: 0 5px;
  border-radius: 13px;
  background: #e2493e;
  color: #fff;
  font: 400 15px/26px "Inter", sans-serif;
  text-align: center;
}
.badge-wide { right: -7px; font-size: 13px; padding: 0 4px; }
```
